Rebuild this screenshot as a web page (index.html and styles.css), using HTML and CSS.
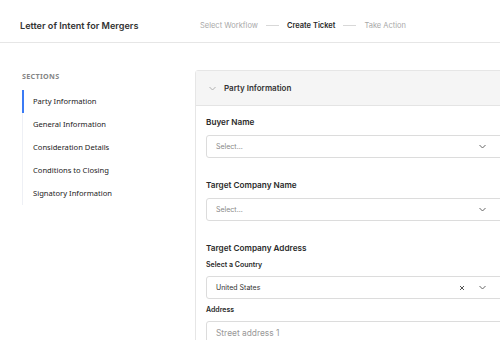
FILE: index.html
```html
<!DOCTYPE html>
<html lang="en">
<head>
  <meta charset="UTF-8">
  <title>Letter of Intent for Mergers</title>
  <link rel="stylesheet" href="styles.css">
</head>
<body>
  <div class="topbar">
    <div class="doc-title">Letter of Intent for Mergers</div>
    <div class="steps">
      <span class="step">Select Workflow</span>
      <span class="step-line"></span>
      <span class="step active">Create Ticket</span>
      <span class="step-line"></span>
      <span class="step">Take Action</span>
    </div>
  </div>

  <div class="layout">
    <div class="sidebar">
      <div class="sidebar-title">SECTIONS</div>
      <ul class="section-list">
        <li class="section-item active">Party Information</li>
        <li class="section-item">General Information</li>
        <li class="section-item">Consideration Details</li>
        <li class="section-item">Conditions to Closing</li>
        <li class="section-item">Signatory Information</li>
      </ul>
    </div>

    <div class="panel">
      <div class="panel-header">
        <svg class="chev" width="7" height="5" viewBox="0 0 7 5"><path d="M0.5 1 L3.5 4 L6.5 1" fill="none" stroke="#b0b0b0" stroke-width="1"/></svg>
        <span>Party Information</span>
      </div>
      <div class="panel-body">
        <div class="field">
          <div class="label">Buyer Name</div>
          <div class="select">
            <span class="placeholder">Select...</span>
            <svg class="chev" width="7" height="5" viewBox="0 0 7 5"><path d="M0.5 1 L3.5 4 L6.5 1" fill="none" stroke="#666" stroke-width="1"/></svg>
          </div>
        </div>
        <div class="field">
          <div class="label">Target Company Name</div>
          <div class="select">
            <span class="placeholder">Select...</span>
            <svg class="chev" width="7" height="5" viewBox="0 0 7 5"><path d="M0.5 1 L3.5 4 L6.5 1" fill="none" stroke="#666" stroke-width="1"/></svg>
          </div>
        </div>
        <div class="field">
          <div class="label">Target Company Address</div>
          <div class="sublabel">Select a Country</div>
          <div class="select">
            <span class="value">United States</span>
            <svg class="clear" width="6" height="6" viewBox="0 0 6 6"><path d="M1 1 L5 5 M5 1 L1 5" fill="none" stroke="#555" stroke-width="1"/></svg>
            <svg class="chev" width="7" height="5" viewBox="0 0 7 5"><path d="M0.5 1 L3.5 4 L6.5 1" fill="none" stroke="#666" stroke-width="1"/></svg>
          </div>
          <div class="sublabel addr">Address</div>
          <div class="input">Street address 1</div>
        </div>
      </div>
    </div>
  </div>
</body>
</html>
```

FILE: styles.css
```css
body {
  margin: 0;
  width: 500px;
  height: 340px;
  overflow: hidden;
  background: #fff;
  color: #2b2b2b;
  font-family: Inter, "Liberation Sans", sans-serif;
}

.topbar {
  height: 34px;
  padding: 8px 0 0 20px;
  display: flex;
  align-items: center;
  border-bottom: 1px solid #e6e6e6;
}

.doc-title {
  width: 180px;
  font-size: 9.1px;
  font-weight: 600;
  color: #333;
}

.steps {
  display: flex;
  align-items: center;
  gap: 8px;
  font-size: 7.5px;
  color: #a8a8a8;
}

.step.active {
  color: #2a2a2a;
  font-weight: 600;
}

.step-line {
  width: 13px;
  height: 1px;
  background: #d8d8d8;
}

.layout {
  display: flex;
  padding-top: 27px;
  overflow: hidden;
}

.sidebar {
  flex: 0 0 173px;
  padding-left: 22px;
  font-family: "Noto Sans", "Open Sans", sans-serif;
}

.sidebar-title {
  font-size: 7.2px;
  font-weight: 700;
  color: #858585;
  letter-spacing: 0.3px;
  line-height: 12px;
}

.section-list {
  list-style: none;
  margin: 8px 0 0;
  padding: 0;
  border-left: 1px solid #eef0f5;
}

.section-item {
  height: 23px;
  line-height: 23px;
  padding-left: 10px;
  font-size: 7.6px;
  color: #222;
}

.section-item.active {
  margin-left: -1px;
  border-left: 2px solid #3b7bf5;
  padding-left: 9px;
}

.panel {
  flex: 0 0 330px;
  border: 1px solid #e6e6e6;
  border-radius: 3px 0 0 0;
}

.panel-header {
  height: 34px;
  display: flex;
  align-items: center;
  gap: 8px;
  padding-left: 13px;
  background: #f5f5f5;
  border-bottom: 1px solid #e4e4e4;
  font-size: 8px;
  font-weight: 600;
  color: #333;
}

.panel-body {
  padding: 10px 10px 0;
}

.field + .field {
  margin-top: 21px;
}

.label {
  font-size: 8.2px;
  font-weight: 600;
  line-height: 12px;
  color: #2a2a2a;
  margin-bottom: 7px;
}

.sublabel {
  font-size: 7px;
  font-weight: 600;
  line-height: 10px;
  color: #2a2a2a;
  margin-top: -1px;
  margin-bottom: 6px;
}

.sublabel.addr {
  margin-top: 6px;
}

.select,
.input {
  height: 21px;
  border: 1px solid #dcdcdc;
  border-radius: 3px;
  display: flex;
  align-items: center;
  padding: 0 29px 0 9px;
  font-size: 7px;
}

.select .placeholder {
  flex: 1;
  color: #888;
}

.select .value {
  flex: 1;
  color: #333;
}

.select .clear {
  margin-right: 14px;
}

.input {
  height: 22px;
  font-size: 8.4px;
  color: #999;
}
```
